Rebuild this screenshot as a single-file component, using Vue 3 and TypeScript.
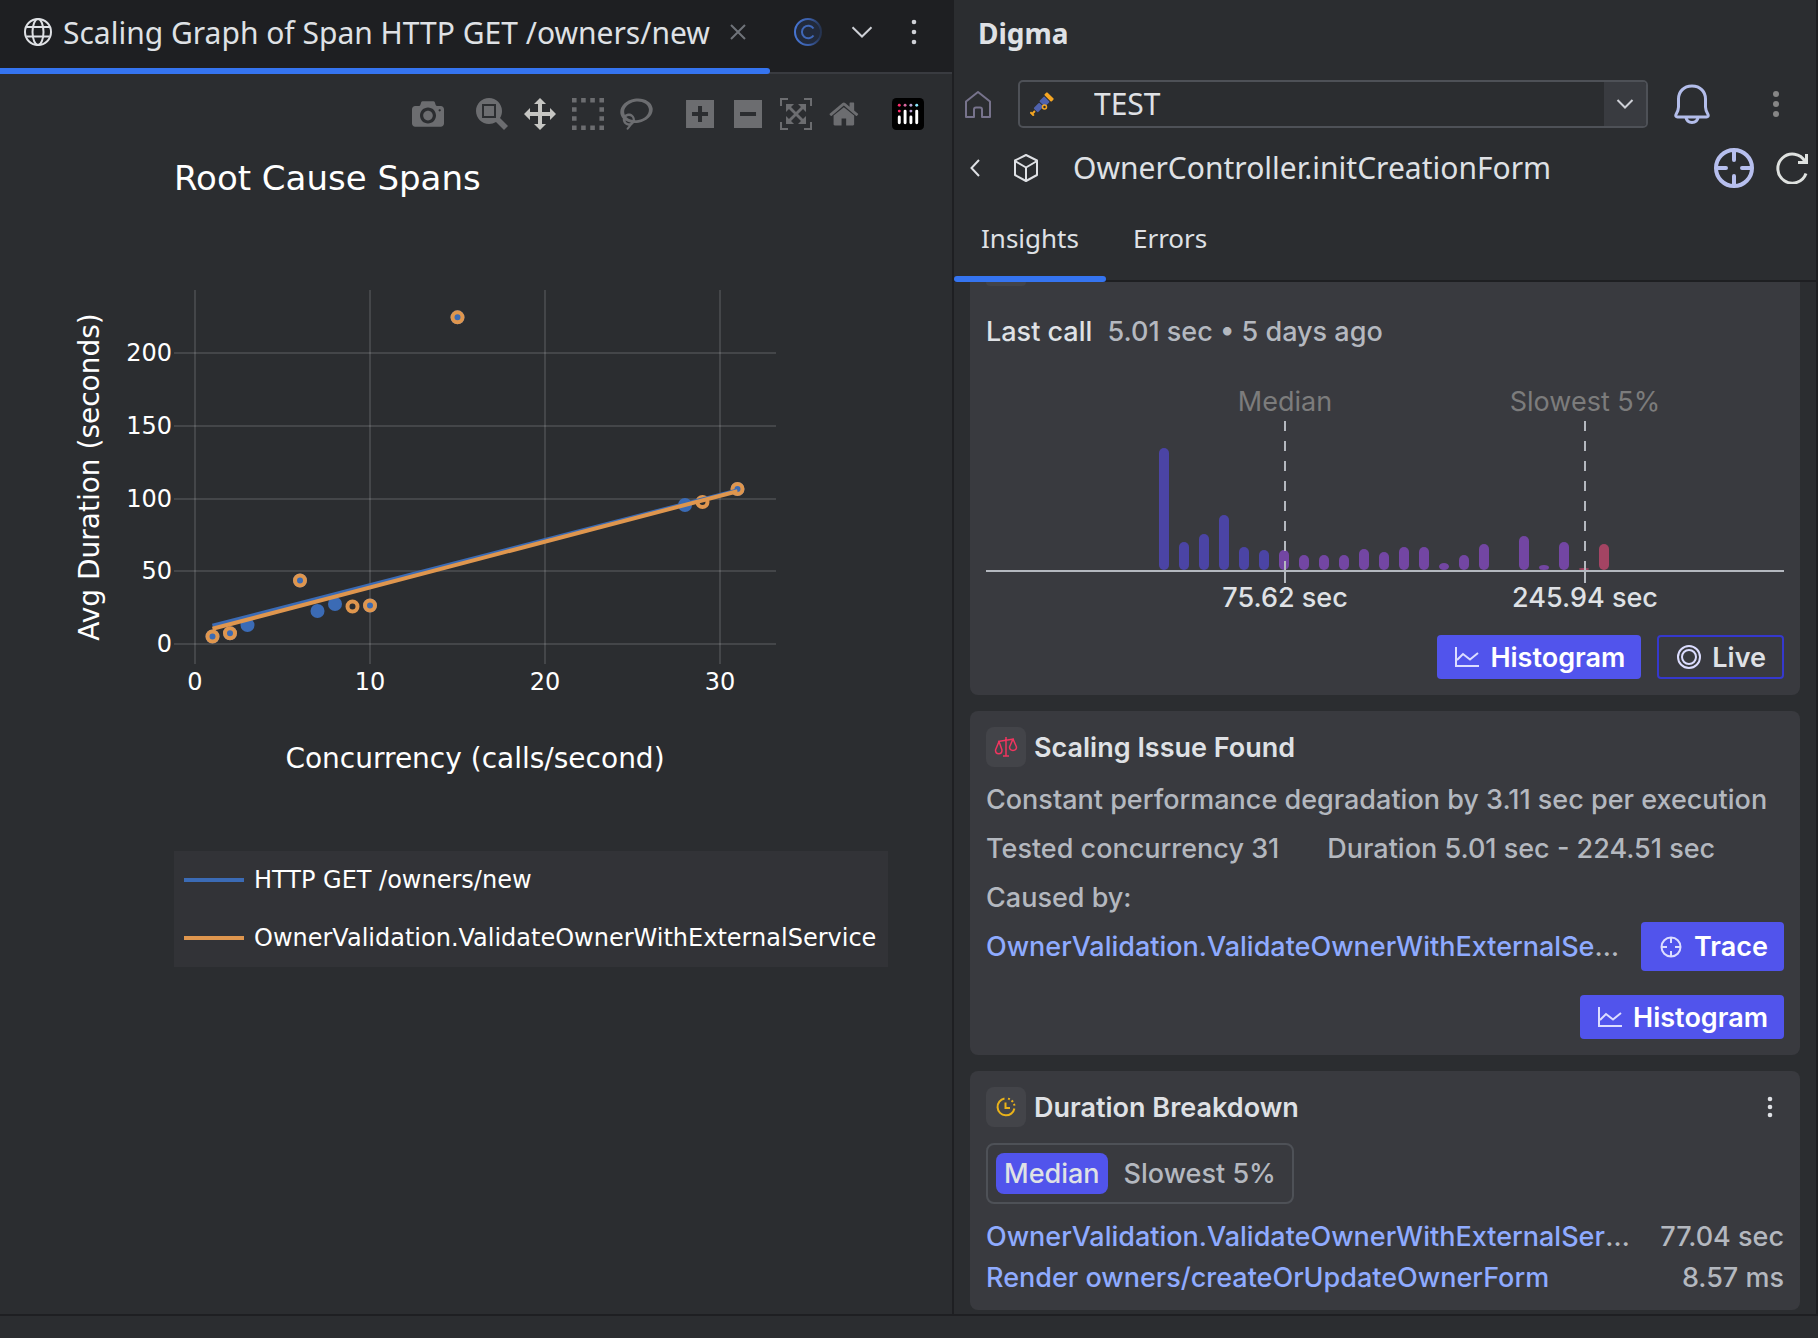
<script setup lang="ts">
import { ref } from 'vue'

interface Point { x: number; y: number }
interface Tool { name: string; width: number; path: string; active?: boolean; first?: boolean }

const tools: Tool[] = [
  { name: 'Download plot as a png', width: 1000, path: 'm500 450c-83 0-150-67-150-150 0-83 67-150 150-150 83 0 150 67 150 150 0 83-67 150-150 150z m400 150h-120c-16 0-34 13-39 29l-31 93c-6 15-23 28-40 28h-340c-16 0-34-13-39-28l-31-94c-6-15-23-28-40-28h-120c-55 0-100-45-100-100v-450c0-55 45-100 100-100h800c55 0 100 45 100 100v450c0 55-45 100-100 100z m-400-550c-138 0-250 112-250 250 0 138 112 250 250 250 138 0 250-112 250-250 0-138-112-250-250-250z m365 380c-19 0-35 16-35 35 0 19 16 35 35 35 19 0 35-16 35-35 0-19-16-35-35-35z' },
  { name: 'Zoom', width: 1000, first: true, path: 'm1000-25l-250 251c40 63 63 138 63 218 0 224-182 406-407 406-224 0-406-182-406-406s183-406 407-406c80 0 155 22 218 62l250-250 125 125z m-812 250l0 438 437 0 0-438-437 0z m62 375l313 0 0-312-313 0 0 312z' },
  { name: 'Pan', width: 1000, active: true, path: 'm1000 350l-187 188 0-125-250 0 0 250 125 0-188 187-187-187 125 0 0-250-250 0 0 125-188-188 186-187 0 125 252 0 0-250-125 0 187-188 188 188-125 0 0 250 250 0 0-126 187 188z' },
  { name: 'Box Select', width: 1000, path: 'm0 850l0-143 143 0 0 143-143 0z m286 0l0-143 143 0 0 143-143 0z m285 0l0-143 143 0 0 143-143 0z m286 0l0-143 143 0 0 143-143 0z m-857-286l0-143 143 0 0 143-143 0z m857 0l0-143 143 0 0 143-143 0z m-857-285l0-143 143 0 0 143-143 0z m857 0l0-143 143 0 0 143-143 0z m-857-286l0-143 143 0 0 143-143 0z m286 0l0-143 143 0 0 143-143 0z m285 0l0-143 143 0 0 143-143 0z m286 0l0-143 143 0 0 143-143 0z' },
  { name: 'Lasso Select', width: 1031, path: 'm1018 538c-36 207-290 336-568 286-277-48-473-256-436-463 10-57 36-108 76-151-13-66 11-137 68-183 34-28 75-41 114-42l-55-70 0 0c-2-1-3-2-4-3-10-14-8-34 5-45 14-11 34-8 45 4 1 1 2 3 2 5l0 0 113 140c16 11 31 24 45 40 4 3 6 7 8 11 48-3 100 0 151 9 278 48 473 255 436 462z m-624-379c-80 14-149 48-197 96 42 42 109 47 156 9 33-26 47-66 41-105z m-187-74c-19 16-33 37-39 60 50-32 109-55 174-68-42-25-95-24-135 8z m360 75c-34-7-69-9-102-8 8 62-16 128-68 170-73 59-175 54-244-5-9 20-16 40-20 61-28 159 121 317 333 354s407-60 434-217c28-159-121-318-333-355z' },
  { name: 'Zoom in', width: 875, first: true, path: 'm1 787l0-875 875 0 0 875-875 0z m687-500l-187 0 0-187-125 0 0 187-188 0 0 125 188 0 0 187 125 0 0-187 187 0 0-125z' },
  { name: 'Zoom out', width: 875, path: 'm0 788l0-876 875 0 0 876-875 0z m688-500l-500 0 0 125 500 0 0-125z' },
  { name: 'Autoscale', width: 1000, path: 'm250 850l-187 0-63 0 0-62 0-188 63 0 0 188 187 0 0 62z m688 0l-188 0 0-62 188 0 0-188 62 0 0 188 0 62-62 0z m-875-938l0 188-63 0 0-188 0-62 63 0 187 0 0 62-187 0z m875 188l0-188-188 0 0-62 188 0 62 0 0 62 0 188-62 0z m-125 188l-1 0-93-94-156 156 156 156 92-93 2 0 0 250-250 0 0-2 93-92-156-156-156 156 94 92 0 2-250 0 0-250 0 0 93 93 157-156-157-156-93 94 0 0 0-250 250 0 0 0-94 93 156 157 156-157-93-93 0 0 250 0 0 250z' },
  { name: 'Reset axes', width: 929, path: 'm786 296v-267q0-15-11-26t-25-10h-214v214h-143v-214h-214q-15 0-25 10t-11 26v267q0 1 0 2t0 2l321 264 321-264q1-1 1-4z m124 39l-34-41q-5-5-12-6h-2q-7 0-12 3l-386 322-386-322q-7-4-13-4-7 2-12 7l-35 41q-4 5-3 13t6 12l401 334q18 15 42 15t43-15l136-114v109q0 8 5 13t13 5h107q8 0 13-5t5-13v-227l122-102q5-5 6-12t-4-13z' },
]

// Scatter plot scales
const px = (v: number): number => 195 + v * 17.5
const py = (v: number): number => 446 - v * 1.455

const xTicks: number[] = [0, 10, 20, 30]
const yTicks: number[] = [0, 50, 100, 150, 200]

const httpPoints: Point[] = [
  { x: 1, y: 5.2 }, { x: 2, y: 7.4 }, { x: 3, y: 13 }, { x: 6, y: 43.6 }, { x: 7, y: 22.7 },
  { x: 8, y: 27.5 }, { x: 10, y: 26.5 }, { x: 15, y: 224.5 }, { x: 28, y: 95.5 }, { x: 31, y: 106.5 },
]
const validationPoints: Point[] = [
  { x: 1, y: 5.2 }, { x: 2, y: 7.4 }, { x: 6, y: 43.6 }, { x: 9, y: 25.8 }, { x: 10, y: 26.5 },
  { x: 15, y: 224.5 }, { x: 29, y: 97.6 }, { x: 31, y: 106.5 },
]

const series = [
  { name: 'HTTP GET /owners/new', color: '#3b6bb5' },
  { name: 'OwnerValidation.ValidateOwnerWithExternalService', color: '#df964e' },
]

// Duration histogram: bucket heights, left to right
const buckets: number[] = [122, 28, 36, 55, 23, 20, 20, 15, 15, 15, 21, 18, 23, 23, 7, 15, 26, 0, 34, 5, 28, 2, 26]
const bucketColor = (i: number): string => (i < 6 ? '#4b44a5' : i < 21 ? '#7346a3' : '#a44463')
const barPath = (i: number, h: number): string => {
  const x = 173 + i * 20
  const r = Math.min(5, h / 2)
  return `M${x} ${190 - r}V${190 - h + r}a5 ${r} 0 0 1 10 0V${190 - r}a5 ${r} 0 0 1 -10 0z`
}
const markers = [
  { x: 299, label: 'Median', value: '75.62 sec' },
  { x: 599, label: 'Slowest 5%', value: '245.94 sec' },
]

const environment = ref('TEST')
const percentile = ref('Median')
const breakdown = [
  { name: 'OwnerValidation.ValidateOwnerWithExternalService', value: '77.04 sec' },
  { name: 'Render owners/createOrUpdateOwnerForm', value: '8.57 ms' },
]
</script>

<template>
  <div class="ide">
    <div class="panes">
      <section class="editor">
        <header class="tabbar">
          <div class="file-tab">
            <svg width="28" height="28" viewBox="0 0 28 28" fill="none" stroke="#dfe1e5" stroke-width="2">
              <circle cx="14" cy="14" r="13" /><ellipse cx="14" cy="14" rx="5.5" ry="13" />
              <path d="M2.5 9h23M2.5 18.500h23" />
            </svg>
            <span class="file-name">Scaling Graph of Span HTTP GET /owners/new</span>
            <button class="icon-btn close" aria-label="Close tab">
              <svg width="16" height="16" viewBox="0 0 16 16" stroke="#6f737a" stroke-width="2"><path d="M1 1l14 14M15 1L1 15" /></svg>
            </button>
          </div>
          <div class="tab-actions">
            <button class="icon-btn" aria-label="Class tab">
              <svg width="28" height="28" viewBox="0 0 28 28" fill="none" stroke-width="2">
                <defs>
                  <linearGradient id="fade" x1="0" x2="1" y1="0" y2="0">
                    <stop offset="0" stop-color="#4674d2" /><stop offset=".6" stop-color="#3a5ca3" /><stop offset="1" stop-color="#25324d" />
                  </linearGradient>
                </defs>
                <circle cx="14" cy="14" r="13" fill="#222a3b" stroke="url(#fade)" />
                <path d="M19.500 10.500A6.300 6.300 0 1 0 19.500 17.500" stroke="#4068b8" />
              </svg>
            </button>
            <button class="icon-btn" aria-label="Show hidden tabs">
              <svg width="22" height="12" viewBox="0 0 22 12" fill="none" stroke="#ced0d6" stroke-width="2"><path d="M1.500 1.200L11 10.500 20.500 1.200" /></svg>
            </button>
            <button class="icon-btn tab-options" aria-label="Tab options">
              <svg width="6" height="26" viewBox="0 0 6 26" fill="#ced0d6"><circle cx="3" cy="3" r="2.300" /><circle cx="3" cy="13" r="2.300" /><circle cx="3" cy="23" r="2.300" /></svg>
            </button>
          </div>
        </header>

        <div class="modebar">
          <button
            v-for="t in tools" :key="t.name" class="icon-btn tool"
            :class="{ first: t.first, active: t.active }" :aria-label="t.name"
          >
            <svg height="32" :viewBox="`0 0 ${t.width} 1000`"><path :d="t.path" transform="matrix(1 0 0 -1 0 850)" /></svg>
          </button>
          <a class="tool first" href="#" aria-label="Produced with Plotly">
            <svg width="32" height="32" viewBox="0 0 132 132">
              <rect width="132" height="132" rx="18" fill="#000" />
              <g fill="#ff2c6d"><circle cx="30" cy="30" r="6" /><circle cx="30" cy="54" r="6" /></g>
              <circle cx="54" cy="30" r="6" fill="#d7699f" />
              <g fill="#b9a3d3"><circle cx="78" cy="30" r="6" /><circle cx="78" cy="54" r="6" /></g>
              <circle cx="102" cy="30" r="6" fill="#8be9ff" />
              <path fill="#fff" d="M30 72a6 6 0 0 0-6 6v24a6 6 0 0 0 12 0V78a6 6 0 0 0-6-6zM78 72a6 6 0 0 0-6 6v24a6 6 0 0 0 12 0V78a6 6 0 0 0-6-6zM54 48a6 6 0 0 0-6 6v48a6 6 0 0 0 12 0V54a6 6 0 0 0-6-6zM102 48a6 6 0 0 0-6 6v48a6 6 0 0 0 12 0V54a6 6 0 0 0-6-6z" />
            </svg>
          </a>
        </div>

        <h1 class="plot-title">Root Cause Spans</h1>

        <svg class="plot" viewBox="0 0 952 589" role="img" aria-label="Average duration by concurrency">
          <g stroke="#fff" stroke-opacity=".12" stroke-width="2">
            <path v-for="t in xTicks" :key="'x' + t" :d="`M${px(t)} 92V466`" />
            <path v-for="t in yTicks" :key="'y' + t" :d="`M174 ${Math.round(py(t))}H776`" />
          </g>
          <g class="tick" text-anchor="middle">
            <text v-for="t in xTicks" :key="t" :x="px(t)" y="492">{{ t }}</text>
          </g>
          <g class="tick" text-anchor="end">
            <text v-for="t in yTicks" :key="t" x="172" :y="Math.round(py(t)) + 8">{{ t }}</text>
          </g>
          <circle v-for="p in httpPoints" :key="p.x" :cx="px(p.x)" :cy="py(p.y)" r="7" :fill="series[0].color" />
          <g fill="none" :stroke="series[1].color" stroke-width="4">
            <circle v-for="p in validationPoints" :key="p.x" :cx="px(p.x)" :cy="py(p.y)" r="5" />
          </g>
          <path :d="`M${px(1)} ${py(12.6)}L${px(31)} ${py(105.6)}`" :stroke="series[0].color" stroke-width="4" />
          <path :d="`M${px(1)} ${py(10.5)}L${px(31)} ${py(105)}`" :stroke="series[1].color" stroke-width="4" />
          <text class="axis" text-anchor="middle" x="475" y="570">Concurrency (calls/second)</text>
          <text class="axis" text-anchor="middle" transform="translate(99 279) rotate(-90)">Avg Duration (seconds)</text>
        </svg>

        <ul class="legend">
          <li v-for="s in series" :key="s.name">
            <i class="swatch" :style="{ background: s.color }"></i>{{ s.name }}
          </li>
        </ul>
      </section>

      <section class="digma">
        <h2 class="tool-title">Digma</h2>

        <div class="env-row">
          <button class="icon-btn" aria-label="Home">
            <svg width="26" height="28" viewBox="0 0 26 28" fill="none" stroke="#77738c" stroke-width="2" stroke-linejoin="round">
              <path d="M1 11.500L13 2l12 9.500V27h-8v-7.500a2 2 0 0 0-2-2h-4a2 2 0 0 0-2 2V27H1z" />
            </svg>
          </button>
          <label class="env">
            <svg width="24" height="24" viewBox="0 0 24 24">
              <g transform="rotate(-45 12 12)">
                <rect x="20" y="7" width="4" height="10" rx="1" fill="#f5a623" />
                <rect x="12" y="8" width="7" height="8" rx="1" fill="#4f62ad" />
                <rect x="3" y="9" width="8" height="6" rx="1" fill="#4f62ad" />
                <path d="M-3 9.500h2v1.500h3v2h-3v1.500h-2z" fill="#f5a623" />
              </g>
              <circle cx="14.500" cy="15" r="2" fill="#2b2d30" stroke="#f5a623" stroke-width="1.500" />
            </svg>
            <select v-model="environment" aria-label="Environment"><option>TEST</option></select>
            <span class="env-arrow">
              <svg width="18" height="10" viewBox="0 0 18 10" fill="none" stroke="#ced0d6" stroke-width="2"><path d="M1.500 1L9 8.500 16.500 1" /></svg>
            </span>
          </label>
          <button class="icon-btn" aria-label="Notifications">
            <svg width="36" height="40" viewBox="0 0 36 40" fill="none" stroke="#b3bdea" stroke-width="3" stroke-linejoin="round">
              <path d="M18 2C9.500 2 4.500 8 4.500 15v8c0 3-1 5-2.500 7.500-.6 1.500 0 2.500 1.500 2.500h29c1.500 0 2.100-1 1.500-2.500C32.500 28 31.500 26 31.500 23v-8C31.500 8 26.500 2 18 2z" />
              <path d="M12 33.500c1 6.500 11 6.500 12 0" />
            </svg>
          </button>
          <button class="icon-btn env-more" aria-label="More">
            <svg width="6" height="26" viewBox="0 0 6 26" fill="#868686"><circle cx="3" cy="3" r="3" /><circle cx="3" cy="13" r="3" /><circle cx="3" cy="23" r="3" /></svg>
          </button>
        </div>

        <div class="scope-row">
          <button class="icon-btn back" aria-label="Back">
            <svg width="10" height="18" viewBox="0 0 10 18" fill="none" stroke="#dfe1e5" stroke-width="2"><path d="M9 1L1.500 9 9 17" /></svg>
          </button>
          <svg class="cube" width="26" height="28" viewBox="0 0 26 28" fill="none" stroke="#dfe1e5" stroke-width="2" stroke-linejoin="round">
            <path d="M13 1l11 5.500v14.500L13 27 2 21V6.500zM2 7l11 6.500L24 7M13 13.500V27" />
          </svg>
          <span class="scope-name">OwnerController.initCreationForm</span>
          <button class="icon-btn" aria-label="Locate">
            <svg width="40" height="40" viewBox="0 0 40 40" fill="none" stroke="#b7bfee" stroke-width="4">
              <circle cx="20" cy="20" r="18" /><path stroke-linecap="round" d="M20 3v9M20 28v9M3 20h9M28 20h9" />
            </svg>
          </button>
          <button class="icon-btn refresh" aria-label="Refresh">
            <svg width="32" height="32" viewBox="0 0 32 32" fill="none" stroke="#dee1df" stroke-width="3">
              <path d="M30 21.500A14.500 14.500 0 1 1 29 9.500" /><path d="M22 10.500h8.500V2" />
            </svg>
          </button>
        </div>

        <nav class="tabs">
          <button class="tab selected">Insights</button>
          <button class="tab">Errors</button>
        </nav>

        <div class="insights">
          <article class="card clipped">
            <div class="chip-edge"></div>
            <p class="last-call"><span class="strong">Last call</span> <span>5.01 sec • 5 days ago</span></p>
            <svg class="histogram" viewBox="0 0 798 239" role="img" aria-label="Duration histogram">
              <path v-for="(h, i) in buckets" :key="i" :d="h ? barPath(i, h) : ''" :fill="bucketColor(i)" />
              <path d="M0 191H798" stroke="#b4b8bf" stroke-width="2" />
              <g v-for="m in markers" :key="m.label" text-anchor="middle">
                <path :d="`M${m.x} 41V191`" stroke="#b4b8bf" stroke-width="2" stroke-dasharray="10" />
                <path :d="`M${m.x} 190V203`" stroke="#b4b8bf" stroke-width="2" />
                <text :x="m.x" y="31" fill="#7c7c7c">{{ m.label }}</text>
                <text class="value" :x="m.x" y="227">{{ m.value }}</text>
              </g>
            </svg>
            <div class="actions first-actions">
              <button class="btn">
                <svg width="24" height="20" viewBox="0 0 24 20" fill="none" stroke="#dcddff" stroke-width="2"><path d="M1 0v19h23M2 13l6-6 7 5.500L23 6" /></svg>
                Histogram
              </button>
              <button class="btn outline">
                <svg width="24" height="24" viewBox="0 0 24 24" fill="none" stroke="#dcddff" stroke-width="2"><circle cx="12" cy="12" r="11" /><circle cx="12" cy="12" r="7" /></svg>
                Live
              </button>
            </div>
          </article>

          <article class="card">
            <header class="card-head">
              <span class="chip">
                <svg width="24" height="24" viewBox="0 0 24 24" fill="none" stroke="#f0355f" stroke-width="1.500" stroke-linejoin="round">
                  <path d="M12 2v19M9 21h6M4 6.500L20 4M5 6.500L1.500 15c0 5 6.500 5 6.500 0zM19 4l-3.500 8c0 4.500 7 4.500 7 0z" />
                </svg>
              </span>
              <h3>Scaling Issue Found</h3>
            </header>
            <p class="line">Constant performance degradation by 3.11 sec per execution</p>
            <p class="line pair"><span>Tested concurrency 31</span><span>Duration 5.01 sec - 224.51 sec</span></p>
            <p class="line">Caused by:</p>
            <div class="cause">
              <span class="ellipsis"><a href="#">OwnerValidation.ValidateOwnerWithExternalService</a></span>
              <button class="btn trace">
                <svg width="24" height="24" viewBox="0 0 24 24" fill="none" stroke="#dcddff" stroke-width="2"><circle cx="12" cy="12" r="9.500" /><path d="M12 2v6M12 16v6M2 12h6M16 12h6" /></svg>
                Trace
              </button>
            </div>
            <div class="actions">
              <button class="btn">
                <svg width="24" height="20" viewBox="0 0 24 20" fill="none" stroke="#dcddff" stroke-width="2"><path d="M1 0v19h23M2 13l6-6 7 5.500L23 6" /></svg>
                Histogram
              </button>
            </div>
          </article>

          <article class="card">
            <header class="card-head">
              <span class="chip">
                <svg width="20" height="20" viewBox="0 0 20 20" fill="none" stroke="#e9b21a" stroke-width="2">
                  <path d="M8.500 1.500A8.500 8.500 0 1 0 18.400 11.500" /><path d="M12 1.600A8.500 8.500 0 0 1 18.500 9" stroke-dasharray="2 2" /><path d="M9.500 5.500V11H14" />
                </svg>
              </span>
              <h3>Duration Breakdown</h3>
              <button class="icon-btn card-more" aria-label="More actions">
                <svg width="6" height="22" viewBox="0 0 6 22" fill="#dfe1e5"><circle cx="3" cy="3" r="2.300" /><circle cx="3" cy="11" r="2.300" /><circle cx="3" cy="19" r="2.300" /></svg>
              </button>
            </header>
            <div class="toggle">
              <button
                v-for="p in ['Median', 'Slowest 5%']" :key="p"
                :class="{ on: p === percentile }" @click="percentile = p"
              >{{ p }}</button>
            </div>
            <ul class="breakdown">
              <li v-for="b in breakdown" :key="b.name">
                <span class="ellipsis"><a href="#">{{ b.name }}</a></span><span>{{ b.value }}</span>
              </li>
            </ul>
          </article>
        </div>
      </section>
    </div>
    <footer class="statusbar"></footer>
  </div>
</template>

<style>
body { margin: 0; background: #2b2d30; }
</style>

<style scoped>
* { box-sizing: border-box; }
h1, h2, h3, p, ul { margin: 0; padding: 0; font-size: inherit; font-weight: inherit; list-style: none; }
svg { display: block; flex: none; }
button { margin: 0; padding: 0; border: 0; background: none; color: inherit; font: inherit; }
a { color: #8fabff; text-decoration: none; }

.ide { display: flex; flex-direction: column; min-height: 100vh; background: #2b2d30; color: #dfe1e5; font: 30px/38px "Noto Sans", sans-serif; }
.panes { flex: 1; display: grid; grid-template-columns: 954fr 864fr; border-bottom: 2px solid #1e1f22; }
.statusbar { height: 22px; }
.icon-btn { display: flex; align-items: center; justify-content: center; }

.editor { min-width: 0; border-right: 2px solid #1e1f22; }
.tabbar { display: flex; height: 74px; background: #1e1f22; border-bottom: 2px solid #393b40; }
.file-tab { display: flex; align-items: center; height: 74px; padding: 0 24px 10px; position: relative; }
.file-tab::after { content: ""; position: absolute; left: 0; right: 0; bottom: 0; height: 6px; border-radius: 0 3px 3px 0; background: #3574f0; }
.file-name { margin-left: 11px; padding-top: 2px; white-space: nowrap; }
.close { margin-left: 20px; }
.tab-actions { flex: 1; display: flex; align-items: center; gap: 29px; padding: 0 35px 8px 24px; }
.tab-options { margin-left: auto; }

.modebar { display: flex; justify-content: flex-end; padding: 24px 28px 0 0; }
.tool { display: flex; justify-content: center; width: 32px; height: 32px; margin-left: 16px; fill: #6c6d70; }
.tool.first { margin-left: 32px; }
.tool.active { fill: #c6c6c3; }

.plot-title { margin: 28px 0 0 174px; color: #fff; font: 34px/40px "DejaVu Sans", sans-serif; }
.plot { width: 100%; fill: #fff; font-family: "DejaVu Sans", sans-serif; }
.tick { font-size: 24px; }
.axis { font-size: 28px; }
.legend { width: fit-content; margin: 64px 0 0 174px; padding: 0 12px 0 10px; background: #323337; color: #fff; font: 24px/58px "DejaVu Sans", sans-serif; }
.legend li { display: flex; align-items: center; white-space: nowrap; }
.swatch { width: 60px; height: 4px; margin-right: 10px; }

.digma { min-width: 0; border-right: 2px solid #1e1f22; }
.tool-title { padding: 14px 24px; font-size: 28px; font-weight: 700; }
.env-row { display: flex; align-items: center; padding-left: 11px; margin-top: 14px; }
.env { flex: 1; display: flex; align-items: center; height: 48px; margin: 0 26px 0 27px; padding-left: 10px; border: 2px solid #4e5157; border-radius: 5px; overflow: hidden; }
.env select { flex: 1; min-width: 0; margin-left: 40px; border: 0; outline: 0; appearance: none; background: none; color: inherit; font: inherit; }
.env-arrow { display: flex; align-items: center; justify-content: center; width: 42px; height: 44px; background: #393b40; }
.env-more { margin: 0 37px 0 63px; }
.scope-row { display: flex; align-items: center; height: 40px; margin-top: 20px; padding: 0 8px 0 16px; }
.cube { margin: 0 34px 0 33px; }
.scope-name { flex: 1; }
.refresh { margin-left: 22px; }

.tabs { display: flex; height: 88px; margin-top: 6px; border-bottom: 2px solid #1e1f22; font-size: 26px; }
.tab { height: 88px; padding: 0 27px; position: relative; }
.tab.selected::after { content: ""; position: absolute; left: 0; right: 0; bottom: 0; height: 6px; border-radius: 3px; background: #3574f0; }

.insights { display: flex; flex-direction: column; gap: 16px; padding: 0 16px 4px; color: #b4b8bf; font: 500 27px/33px Inter, sans-serif; }
.card { padding: 16px; border-radius: 8px; background: #393a3f; }
.card.clipped { padding-top: 0; border-radius: 0 0 8px 8px; }
.chip-edge { width: 40px; height: 4px; border-radius: 0 0 8px 8px; background: #424348; }
.strong { margin-right: 8px; color: #dfe1e5; }
.last-call { margin-top: 29px; }
.histogram { width: 100%; margin-top: 32px; font-size: 27px; font-weight: 400; }
.value { fill: #dfe1e5; font-weight: 500; }
.actions { display: flex; justify-content: flex-end; gap: 16px; margin-top: 24px; }
.first-actions { margin-top: 16px; }
.btn { display: flex; align-items: center; gap: 11px; height: 44px; padding: 0 16px 0 18px; border-radius: 4px; background: #5154ec; color: #fff; font-weight: 600; }
.btn.outline { border: 2px solid #3538cd; background: none; color: #dfe1e5; }
.btn.trace { height: 49px; }
.card-head { display: flex; align-items: center; height: 40px; color: #dfe1e5; }
.card-head h3 { flex: 1; margin-left: 8px; font-weight: 600; }
.chip { display: flex; align-items: center; justify-content: center; width: 40px; height: 40px; border-radius: 8px; background: #434449; }
.card-more { margin-right: 11px; }
.line { margin-top: 16px; white-space: nowrap; }
.pair { display: flex; gap: 48px; }
.cause { display: flex; align-items: center; gap: 12px; margin-top: 8px; }
.ellipsis { flex: 1; min-width: 0; overflow: hidden; text-overflow: ellipsis; white-space: nowrap; }
.toggle { display: flex; gap: 8px; width: fit-content; margin-top: 16px; padding: 8px; border: 2px solid #4e5157; border-radius: 8px; }
.toggle button { height: 41px; padding: 0 8px; border-radius: 8px; }
.toggle .on { background: #5154ec; color: #dfe1e5; }
.breakdown { display: flex; flex-direction: column; gap: 8px; margin-top: 16px; }
.breakdown li { display: flex; gap: 20px; white-space: nowrap; }
</style>
